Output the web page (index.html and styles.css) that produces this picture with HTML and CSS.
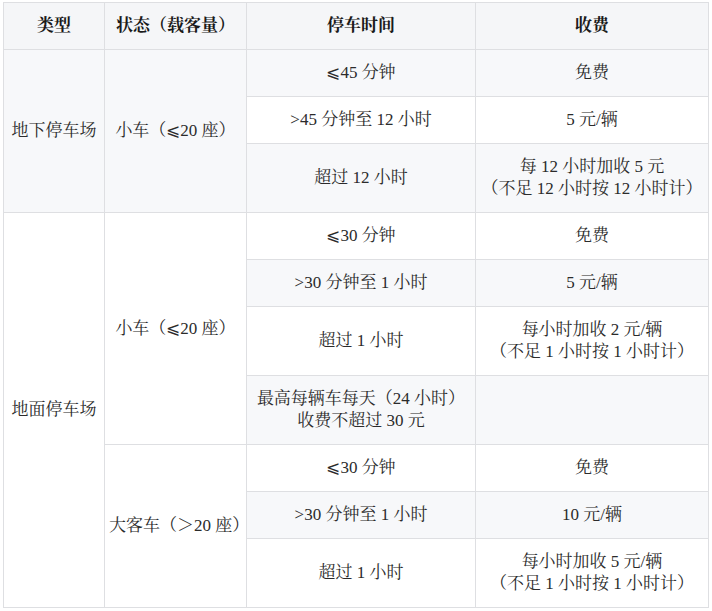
FILE: index.html
```html
<!DOCTYPE html>
<html lang="zh-CN">
<head>
<meta charset="utf-8">
<title>停车收费标准</title>
<link rel="stylesheet" href="styles.css">
</head>
<body>
<div class="wrap">
<table class="fees">
  <colgroup>
    <col class="c-type">
    <col class="c-state">
    <col class="c-time">
    <col class="c-fee">
  </colgroup>
  <thead>
    <tr><th>类型</th><th>状态（载客量）</th><th>停车时间</th><th>收费</th></tr>
  </thead>
  <tbody>
    <tr class="odd">
      <td rowspan="3">地下停车场</td>
      <td rowspan="3">小车（⩽20 座）</td>
      <td>⩽45 分钟</td>
      <td>免费</td>
    </tr>
    <tr>
      <td>&gt;45 分钟至 12 小时</td>
      <td>5 元/辆</td>
    </tr>
    <tr class="odd">
      <td>超过 12 小时</td>
      <td>每 12 小时加收 5 元<br>（不足 12 小时按 12 小时计）</td>
    </tr>
    <tr>
      <td rowspan="7">地面停车场</td>
      <td rowspan="4">小车（⩽20 座）</td>
      <td>⩽30 分钟</td>
      <td>免费</td>
    </tr>
    <tr class="odd">
      <td>&gt;30 分钟至 1 小时</td>
      <td>5 元/辆</td>
    </tr>
    <tr>
      <td>超过 1 小时</td>
      <td>每小时加收 2 元/辆<br>（不足 1 小时按 1 小时计）</td>
    </tr>
    <tr class="odd">
      <td>最高每辆车每天（24 小时）<br>收费不超过 30 元</td>
      <td></td>
    </tr>
    <tr>
      <td rowspan="3">大客车（＞20 座）</td>
      <td>⩽30 分钟</td>
      <td>免费</td>
    </tr>
    <tr class="odd">
      <td>&gt;30 分钟至 1 小时</td>
      <td>10 元/辆</td>
    </tr>
    <tr>
      <td>超过 1 小时</td>
      <td>每小时加收 5 元/辆<br>（不足 1 小时按 1 小时计）</td>
    </tr>
  </tbody>
</table>
</div>
</body>
</html>
```
FILE: styles.css
```css
html, body {
  margin: 0;
  padding: 0;
  background: #ffffff;
}

.wrap {
  padding: 2px 0 0 3px;
}

.fees {
  border-collapse: collapse;
  table-layout: fixed;
  width: 705px;
  font-family: "Liberation Serif", "Noto Serif CJK SC", "Noto Sans CJK SC", serif;
  font-size: 17px;
  line-height: 22px;
  color: #2b2b2b;
}

.c-type { width: 101px; }
.c-state { width: 142px; }
.c-time { width: 229px; }
.c-fee { width: 233px; }

.fees th,
.fees td {
  border: 1px solid #dedfe2;
  padding: 12px 4px;
  text-align: center;
  vertical-align: middle;
  white-space: nowrap;
}

.fees th {
  background: #f5f6f8;
  font-weight: bold;
  color: #1a1a1a;
}

.fees tr.odd td {
  background: #f7f8fa;
}
```
